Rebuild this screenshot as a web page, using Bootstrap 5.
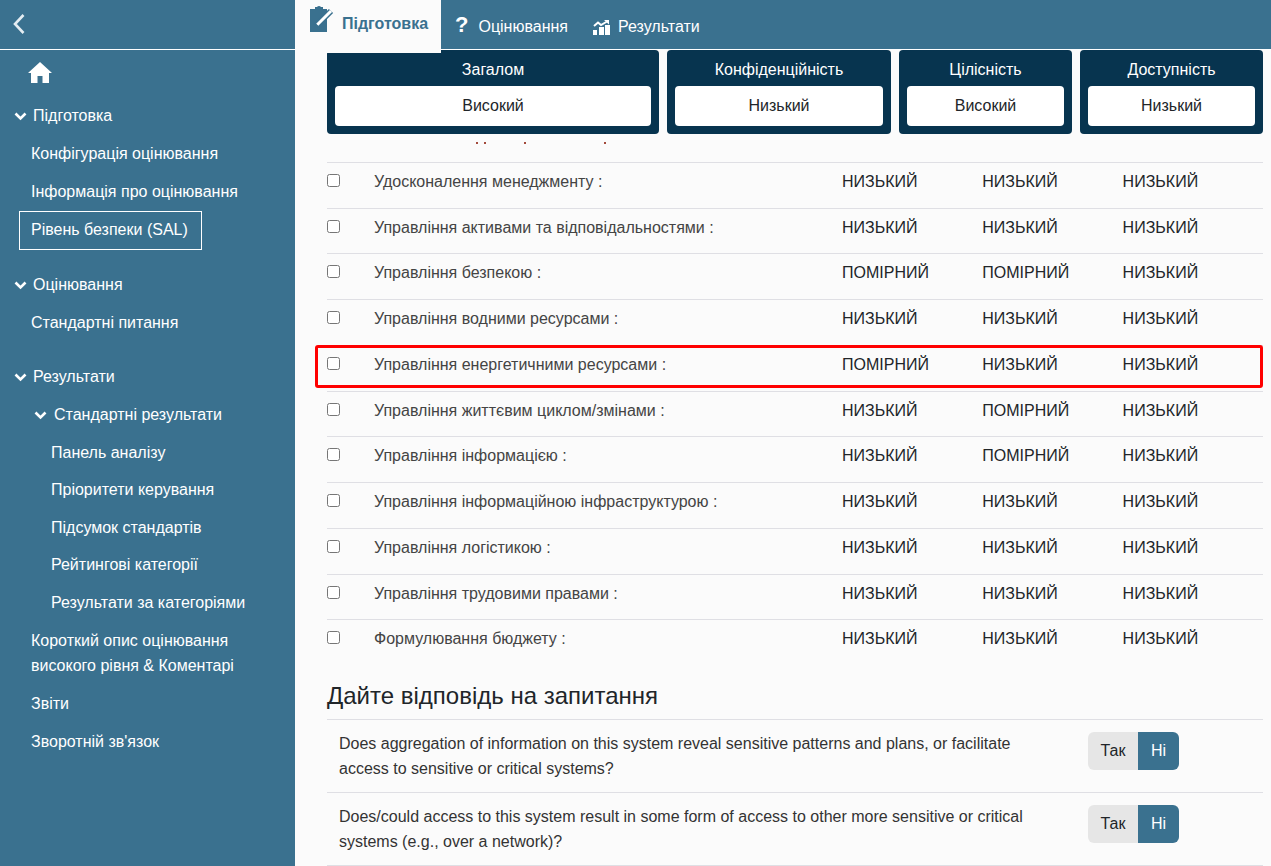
<!DOCTYPE html>
<html lang="uk">
<head>
  <meta charset="UTF-8" />
  <meta name="viewport" content="width=device-width, initial-scale=1" />
  <title>Рівень безпеки (SAL)</title>
  <link href="https://cdn.jsdelivr.net/npm/bootstrap@5.3.3/dist/css/bootstrap.min.css" rel="stylesheet">
  <style>
    html, body { height: 866px; overflow: hidden; }
    body { font-family: "Liberation Sans", Arial, sans-serif; font-size: 16px; background: #fbfbfb; color: #212529; }
    .shell { height: 866px; }
    .side { width: 295px; flex: none; background: #3a718f; color: #fff; }
    .side-top { height: 50px; border-bottom: 1px solid #fff; padding: 11px 0 0 12px; }
    .side-home { height: 47px; padding: 10px 0 0 28px; }
    .side a { color: #fff; text-decoration: none; display: block; line-height: 22px; }
    .side a.side-head { display: flex; align-items: center; height: 38px; padding-left: 14px; }
    .side-head svg { margin-right: 6px; }
    .side a.side-sub { display: flex; align-items: center; height: 38px; padding-left: 34px; }
    .side-sub svg { margin-right: 7px; }
    .side-item { padding: 8px 0 8px 31px; }
    .side-deep { padding: 8px 0 7.4px 51px; }
    .side-now { border: 1px solid #fff; width: 183px; margin-left: 19px; padding: 7px 0 7px 11px !important; height: 39px; }
    .side a.side-gap { margin-top: 16px; }
    .side a.side-two { line-height: 25px; padding-top: 7px; padding-bottom: 7px; }
    .main-col { min-width: 0; }
    .tabbar { height: 50px; background: #3a718f; border-bottom: 1px solid #fff; }
    .tab-on { width: 146px; height: 53px; background: #fbfbfb; color: #3a718f; font-weight: 700; padding: 5px 0 0 14px; position: relative; z-index: 2; }
    .tab-lbl { margin-top: 7px; }
    .tab-off { color: #fff; height: 49px; padding-top: 5px; }
    .tab-first { margin-left: 14px; }
    .tab-last { margin-left: 25px; }
    .tab-q { font-weight: 700; font-size: 22px; line-height: 22px; margin: -5px 10px 0 0; }
    .sum-row { padding: 0 8px 0 32px; height: 84px; gap: 8px; }
    .sum-box { background: #07344f; color: #fff; border-radius: 4px; text-align: center; padding: 8px; height: 84px; }
    .sum-all { width: 332px; }
    .sum-conf { width: 224px; }
    .sum-int { width: 173px; }
    .sum-dost { width: 183px; }
    .sum-val { background: #fff; color: #212529; border-radius: 4px; height: 40px; line-height: 40px; margin-top: 8px; }
    .sum-lbl { line-height: 24px; height: 20px; }
    .speck-row { height: 2px; margin-top: 8px; padding-left: 181px; }
    .speck { width: 2px; height: 2px; background: #a34a3c; }
    .speck:nth-child(2) { margin-left: 6px; }
    .speck:nth-child(3) { margin-left: 38px; }
    .speck:nth-child(4) { margin-left: 78px; }
    .sal-list { margin: 17.75px 8px 0 32px; }
    .sal-row { height: 45.75px; border-top: 1px solid #dfdfe4; display: flex; align-items: flex-start; padding-top: 8px; color: #212529; }
    .sal-row .form-check-input { width: 13px; height: 13px; margin: 3px 34px 0 0; border-color: #767676; border-radius: 2.5px; flex: none; }
    .sal-name { width: 468px; color: #444; flex: none; line-height: 22px; }
    .sal-lvl { width: 140.3px; flex: none; line-height: 21px; }
    .red-frame { position: absolute; left: 315px; top: 345px; width: 948px; height: 43px; border: 3px solid #f00; border-radius: 3px; pointer-events: none; }
    .q-title { margin: 16.25px 8px 0 32px; font-size: 24px; line-height: 29px; font-weight: 400; height: 38px; }
    .q-row { margin: 0 8px 0 32px; height: 73px; border-top: 1px solid #dfdfe4; padding: 12px 0 0 12px; display: flex; }
    .q-last { height: 74px; border-bottom: 1px solid #dfdfe4; }
    .q-text { width: 749px; flex: none; line-height: 25px; color: #333; padding-right: 40px; margin-top: -1.5px; }
    .yn { height: 38px; }
    .yn .btn { font-size: 16px; height: 38px; padding: 0; line-height: 38px; border: 0; }
    .yn .yn-off { width: 50px; background: #e6e6e6; color: #212529; }
    .btn-group.yn .btn.yn-on { width: 41px; background: #3a718f; color: #fff; margin-left: 0; }
  </style>
</head>
<body>
  <div class="d-flex shell">
    <nav class="side">
      <div class="side-top">
        <svg width="14" height="22" viewBox="0 0 14 22"><path d="M11.500 2 L3 11 L11.500 20" fill="none" stroke="#e4edf2" stroke-width="2.6"/></svg>
      </div>
      <div class="side-home">
        <svg width="24" height="21" viewBox="0 0 24 21"><path fill="#fff" d="M12 0 L24 11 L21 11 L21 21 L14.500 21 L14.500 14 L9.500 14 L9.500 21 L3 21 L3 11 L0 11 Z"/></svg>
      </div>
      <a class="side-head" href="#"><svg width="13" height="9" viewBox="0 0 13 9"><path d="M1.500 1.500 L6.500 6.500 L11.500 1.500" fill="none" stroke="#fff" stroke-width="2.6"/></svg>Підготовка</a>
      <a class="side-item" href="#">Конфігурація оцінювання</a>
      <a class="side-item" href="#">Інформація про оцінювання</a>
      <a class="side-item side-now" href="#">Рівень безпеки (SAL)</a>
      <a class="side-head side-gap" href="#"><svg width="13" height="9" viewBox="0 0 13 9"><path d="M1.500 1.500 L6.500 6.500 L11.500 1.500" fill="none" stroke="#fff" stroke-width="2.6"/></svg>Оцінювання</a>
      <a class="side-item" href="#">Стандартні питання</a>
      <a class="side-head side-gap" href="#"><svg width="13" height="9" viewBox="0 0 13 9"><path d="M1.500 1.500 L6.500 6.500 L11.500 1.500" fill="none" stroke="#fff" stroke-width="2.6"/></svg>Результати</a>
      <a class="side-sub" href="#"><svg width="13" height="9" viewBox="0 0 13 9"><path d="M1.500 1.500 L6.500 6.500 L11.500 1.500" fill="none" stroke="#fff" stroke-width="2.6"/></svg>Стандартні результати</a>
      <a class="side-deep" href="#">Панель аналізу</a>
      <a class="side-deep" href="#">Пріоритети керування</a>
      <a class="side-deep" href="#">Підсумок стандартів</a>
      <a class="side-deep" href="#">Рейтингові категорії</a>
      <a class="side-deep" href="#">Результати за категоріями</a>
      <a class="side-item side-two" href="#">Короткий опис оцінювання<br>високого рівня &amp; Коментарі</a>
      <a class="side-item" href="#">Звіти</a>
      <a class="side-item" href="#">Зворотній зв'язок</a>
    </nav>
    <div class="flex-grow-1 main-col">
      <div class="tabbar d-flex">
        <div class="tab-on d-flex">
          <svg width="25" height="27" viewBox="0 0 25 27" class="me-2">
            <path fill="#3a718f" d="M1 4h5V2h2a2.500 2.500 0 0 1 4 0h2v2h4v23H1z"/>
            <path d="M7 21 22 6" stroke="#3a718f" stroke-width="6" fill="none"/>
            <path d="M8 20 22 6" stroke="#fff" stroke-width="3" fill="none"/>
            <path fill="#3a718f" d="M5.500 23l1.500-4.500 3 3z"/>
          </svg>
          <span class="tab-lbl">Підготовка</span>
        </div>
        <div class="tab-off d-flex align-items-center tab-first">
          <span class="tab-q">?</span>Оцінювання
        </div>
        <div class="tab-off d-flex align-items-center tab-last">
          <svg width="17" height="15" viewBox="0 0 17 15" class="me-2">
            <path fill="#fff" d="M0 10h4v5H0zM6 7h5v8H6zM12 5h5v10h-5z"/>
            <path fill="none" stroke="#fff" stroke-width="2" d="M1 6 5 2.500 8 5 14 1.500"/>
            <path fill="#fff" d="M11 0h5v4.500z"/>
          </svg>Результати
        </div>
      </div>
      <div class="d-flex sum-row">
        <div class="sum-box sum-all"><div class="sum-lbl">Загалом</div><div class="sum-val">Високий</div></div>
        <div class="sum-box sum-conf"><div class="sum-lbl">Конфіденційність</div><div class="sum-val">Низький</div></div>
        <div class="sum-box sum-int"><div class="sum-lbl">Цілісність</div><div class="sum-val">Високий</div></div>
        <div class="sum-box sum-dost"><div class="sum-lbl">Доступність</div><div class="sum-val">Низький</div></div>
      </div>
      <div class="d-flex speck-row"><i class="speck"></i><i class="speck"></i><i class="speck"></i><i class="speck"></i></div>
      <div class="sal-list" id="rows"></div>
      <h2 class="q-title">Дайте відповідь на запитання</h2>
      <div class="q-row">
        <div class="q-text">Does aggregation of information on this system reveal sensitive patterns and plans, or facilitate access to sensitive or critical systems?</div>
        <div class="btn-group yn"><button class="btn yn-off">Так</button><button class="btn yn-on">Ні</button></div>
      </div>
      <div class="q-row q-last">
        <div class="q-text">Does/could access to this system result in some form of access to other more sensitive or critical systems (e.g., over a network)?</div>
        <div class="btn-group yn"><button class="btn yn-off">Так</button><button class="btn yn-on">Ні</button></div>
      </div>
    </div>
  </div>
  <div class="red-frame"></div>

  <script>
    const filas = [
      ["Удосконалення менеджменту :", "НИЗЬКИЙ", "НИЗЬКИЙ", "НИЗЬКИЙ"],
      ["Управління активами та відповідальностями :", "НИЗЬКИЙ", "НИЗЬКИЙ", "НИЗЬКИЙ"],
      ["Управління безпекою :", "ПОМІРНИЙ", "ПОМІРНИЙ", "НИЗЬКИЙ"],
      ["Управління водними ресурсами :", "НИЗЬКИЙ", "НИЗЬКИЙ", "НИЗЬКИЙ"],
      ["Управління енергетичними ресурсами :", "ПОМІРНИЙ", "НИЗЬКИЙ", "НИЗЬКИЙ"],
      ["Управління життєвим циклом/змінами :", "НИЗЬКИЙ", "ПОМІРНИЙ", "НИЗЬКИЙ"],
      ["Управління інформацією :", "НИЗЬКИЙ", "ПОМІРНИЙ", "НИЗЬКИЙ"],
      ["Управління інформаційною інфраструктурою :", "НИЗЬКИЙ", "НИЗЬКИЙ", "НИЗЬКИЙ"],
      ["Управління логістикою :", "НИЗЬКИЙ", "НИЗЬКИЙ", "НИЗЬКИЙ"],
      ["Управління трудовими правами :", "НИЗЬКИЙ", "НИЗЬКИЙ", "НИЗЬКИЙ"],
      ["Формулювання бюджету :", "НИЗЬКИЙ", "НИЗЬКИЙ", "НИЗЬКИЙ"]
    ];
    const contenedor = document.getElementById("rows");
    filas.forEach(f => {
      const row = document.createElement("div");
      row.className = "sal-row";
      row.innerHTML = `
        <input class="form-check-input" type="checkbox">
        <div class="sal-name">${f[0]}</div>
        <div class="sal-lvl">${f[1]}</div>
        <div class="sal-lvl">${f[2]}</div>
        <div class="sal-lvl">${f[3]}</div>
      `;
      contenedor.appendChild(row);
    });
  </script>
  <script src="https://cdn.jsdelivr.net/npm/bootstrap@5.3.3/dist/js/bootstrap.bundle.min.js"></script>
</body>
</html>
